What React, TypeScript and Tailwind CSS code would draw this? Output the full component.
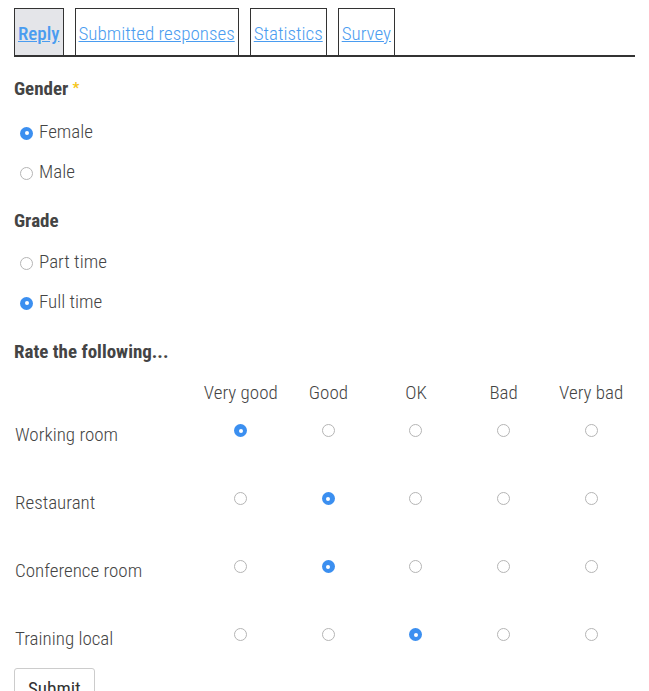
import { useState } from "react"

const tabs = ["Reply", "Submitted responses", "Statistics", "Survey"]
const scale = ["Very good", "Good", "OK", "Bad", "Very bad"]
const items = ["Working room", "Restaurant", "Conference room", "Training local"]

function Radio({ checked, onClick }: { checked: boolean; onClick?: () => void }) {
  return (
    <span
      onClick={onClick}
      className={`inline-flex h-[13px] w-[13px] shrink-0 cursor-pointer items-center justify-center rounded-full ${
        checked ? "bg-[#3b8ff0]" : "border border-[#b5b5b5] bg-white"
      }`}
    >
      {checked && <span className="h-[4px] w-[4px] rounded-full bg-white" />}
    </span>
  )
}

function Choice({ label, checked, onClick }: { label: string; checked: boolean; onClick: () => void }) {
  return (
    <label className="flex h-[40px] items-center gap-[6px] pl-[6px]" onClick={onClick}>
      <Radio checked={checked} />
      <span className="-mt-[4px]">{label}</span>
    </label>
  )
}

export default function App() {
  const [gender, setGender] = useState("Female")
  const [grade, setGrade] = useState("Full time")
  const [ratings, setRatings] = useState<Record<string, number>>({
    "Working room": 0,
    Restaurant: 1,
    "Conference room": 1,
    "Training local": 2,
  })

  return (
    <div
      className="min-h-[691px] bg-white px-[14px] pt-[8px] text-[19px] font-light leading-none text-[#444]"
      style={{ fontFamily: '"Roboto Condensed", Roboto, sans-serif' }}
    >
      <div className="flex gap-[11px] border-b-2 border-[#333]">
        {tabs.map((t, i) => (
          <div
            key={t}
            className={`flex h-[47px] items-end border border-b-0 border-[#333] pr-[3px] pl-[3px] pb-[12px] ${
              i === 0 ? "bg-[#e4e5e9]" : "bg-white"
            }`}
          >
            <a href="#" className={`text-[#4a9cf0] underline ${i === 0 ? "font-medium" : ""}`}>
              {t}
            </a>
          </div>
        ))}
      </div>

      <div className="mt-[22px] flex items-center gap-[4px] font-bold">
        Gender <span className="text-[15px] text-[#f5c518]">*</span>
      </div>
      <div className="mt-[15px]">
        {["Female", "Male"].map((g) => (
          <Choice key={g} label={g} checked={gender === g} onClick={() => setGender(g)} />
        ))}
      </div>

      <div className="mt-[18px] font-bold">Grade</div>
      <div className="mt-[13px]">
        {["Part time", "Full time"].map((g) => (
          <Choice key={g} label={g} checked={grade === g} onClick={() => setGrade(g)} />
        ))}
      </div>

      <div className="mt-[19px] font-bold">Rate the following...</div>

      <div className="mt-[22px] grid grid-cols-[183px_repeat(5,1fr)]">
        <div />
        {scale.map((s) => (
          <div key={s} className="text-center">
            {s}
          </div>
        ))}
      </div>
      <div className="mt-[22px]">
        {items.map((item) => (
          <div key={item} className="grid h-[68px] grid-cols-[183px_repeat(5,1fr)] items-start">
            <div className="pl-px pt-[1px]">{item}</div>
            {scale.map((s, j) => (
              <div key={s} className="flex justify-center">
                <Radio checked={ratings[item] === j} onClick={() => setRatings({ ...ratings, [item]: j })} />
              </div>
            ))}
          </div>
        ))}
      </div>

      <button className="-mt-[28px] block rounded-[3px] border border-[#ccc] bg-white px-[13px] pt-[10px] pb-[10px] font-normal text-[#333]">
        Submit
      </button>
    </div>
  )
}
